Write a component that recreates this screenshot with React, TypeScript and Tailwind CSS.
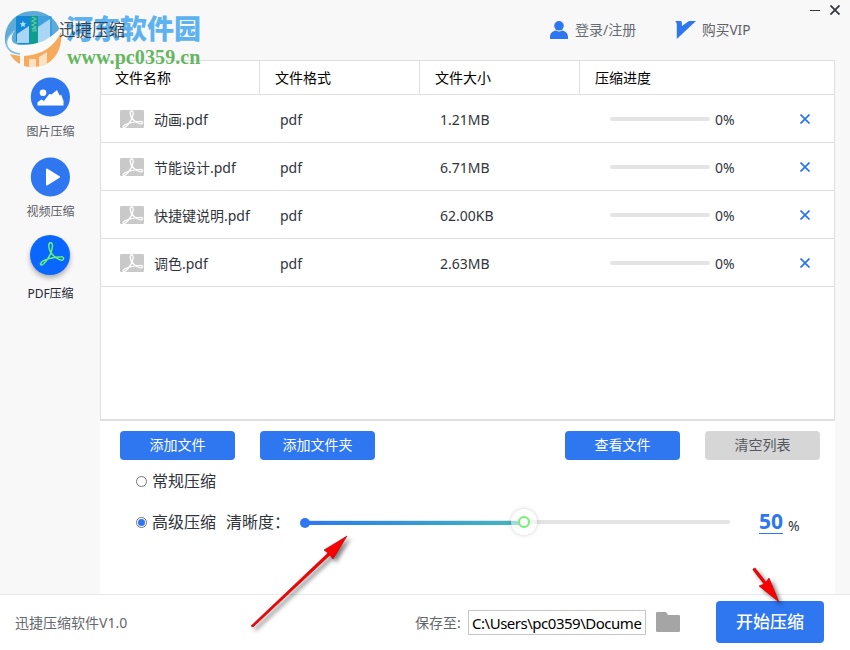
import { useState } from 'react';
import clsx from 'clsx';

interface FileRow {
  name: string;
  type: string;
  size: string;
  progress: number;
}

const FILES: FileRow[] = [
  { name: '动画.pdf', type: 'pdf', size: '1.21MB', progress: 0 },
  { name: '节能设计.pdf', type: 'pdf', size: '6.71MB', progress: 0 },
  { name: '快捷键说明.pdf', type: 'pdf', size: '62.00KB', progress: 0 },
  { name: '调色.pdf', type: 'pdf', size: '2.63MB', progress: 0 },
];

const COLUMNS = ['文件名称', '文件格式', '文件大小', '压缩进度'];

// one ribbon that crosses itself at the root of each of its three loops
const PDF_RIBBON =
  'M20.5 7.800C18 8 18.500 13.500 20.800 17.500C23 21 29.500 26 32.500 25C34.500 24 33.500 21.500 31 21.700C25 22 18 23.500 14 25.500C10.500 27 9.500 30 11.500 30C14.500 29.500 19 22.500 21 17.500C23 12 23 8 20.500 7.800Z';

function FileIcon() {
  return (
    <svg viewBox="0 0 24 18" className="h-[18px] w-6 shrink-0">
      <rect width="24" height="18" rx="1" fill="#c9c9c9" />
      <path d={PDF_RIBBON} transform="translate(-5.600 -5.200) scale(.84 .76)" fill="none" stroke="#fff" strokeWidth="1.6" />
    </svg>
  );
}

function CloseMark({ className }: { className: string }) {
  return (
    <svg viewBox="0 0 10 10" className={className} fill="none" stroke="currentColor" strokeWidth="1.8">
      <path d="M.5 .5l9 9M9.5 .5l-9 9" />
    </svg>
  );
}

function Watermark() {
  return (
    <div className="pointer-events-none absolute top-[5px] left-0 flex">
      <svg viewBox="0 0 70 66" className="h-[66px] w-[66px] shrink-0" preserveAspectRatio="xMinYMin slice">
        <path d="M6 41C1 22 15 6 33 6C46 6 57 14 60 26C55 36 43 42 28 43C17 44 10 43 6 41Z" fill="#5cabd9" />
        <path d="M16 36V13q0-2 2-2h12v28H18z" fill="#1488d6" />
        <path d="M38 39V11h12q2 0 2 2v22z" fill="#3f9fe0" />
        <path d="M30 11h8v28h-8z" fill="#0f9d8e" />
        <path d="M17 38V29l12-8v17zM38 38V22l12-8v19z" fill="#a9d6f5" />
        <path d="M23 16l1 2 2.200.2-1.600 1.500.4 2.300-2-1.100-2 1.100.4-2.300-1.600-1.500L22 18z" fill="#a7def8" />
        <path d="M32 12l4 2-4 2 4 2-4 2 4 2-4 2h4v2h-4" fill="none" stroke="#62c9b5" strokeWidth="1.1" />
        <path d="M15 25C9 34 11 40 23 40C39 40 52 33 61 22C62 35 50 49 29 50C7 51-1 38 15 25Z" fill="#f9fafa" />
        <path d="M13 27C3 35 4 47 20 49" fill="none" stroke="#7dbce6" strokeWidth="1.5" />
        <path d="M10 49l10 2v8C16 57 12 53 10 49zM24 51C42 50 55 41 61 27C63 42 55 62 33 62C30 62 27 62 24 61z" fill="#f5ab5b" />
        <path d="M29 54h7v8h-7zM39 52l8-5v12q-4 2-8 2.500z" fill="#fbe0c3" />
      </svg>
      <div className="flex flex-col pt-[5px]">
        <span className="h-[38px] pt-[2px] font-['Noto_Sans_CJK_SC',sans-serif] text-[27px] leading-[32px] font-black whitespace-nowrap text-[#5eb2ef]">
          河东软件园
        </span>
        <span className="pl-[1px] font-['Liberation_Serif',serif] text-[20px] leading-[18px] font-bold tracking-[0.1px] text-[#65b65f]">
          www.pc0359.cn
        </span>
      </div>
    </div>
  );
}

function Header() {
  return (
    <header className="relative flex h-[60px] shrink-0 items-start">
      <Watermark />
      <h1 className="relative z-10 pt-[20px] pl-[59px] text-[16.5px] leading-[20px] text-[#252a35]/85">迅捷压缩</h1>
      <div className="ml-auto flex pt-[20px] text-[14px] leading-[20px] text-[#666b73]">
        <button className="flex w-[125px]">
          <svg viewBox="0 0 18 18" className="mt-[1px] mr-[7px] h-[18px] w-[18px] fill-[#2e77f1]">
            <circle cx="9" cy="4.8" r="4.8" />
            <path d="M0 18v-2c0-3.600 2.500-6 6-6.500 2 1.200 4 1.200 6 0 3.500.5 6 2.900 6 6.500v2z" />
          </svg>
          登录/注册
        </button>
        <button className="flex w-[136px]">
          <svg viewBox="0 0 21 18" className="mt-[1px] mr-[6px] h-[18px] w-[21px] fill-[#2e77f1]">
            <path d="M0 0h5.500c1.500 0 1.500 2 1.400 5L14 0h7L1.800 18V4C1.800 2 1.300 1 0 0z" />
          </svg>
          <span className="text-[13.7px] text-[#5d6168]">购买VIP</span>
        </button>
      </div>
      <div className="-ml-px flex w-[40px] gap-[10px] pt-[5px] text-[#34373c]">
        <span className="mt-[5px] h-px w-[10px] bg-current" />
        <CloseMark className="h-[10px] w-[10px]" />
      </div>
    </header>
  );
}

function Sidebar() {
  return (
    <nav className="flex w-[101px] shrink-0 flex-col items-center pt-[17px] text-[12px] leading-[18px] text-[#5b5d64]">
      <a className="flex h-[80px] flex-col items-center">
        <svg viewBox="0 0 40 40" className="mb-[6px] h-10 w-10">
          <circle cx="20.400" cy="20" r="19.600" fill="#2e77f1" />
          <circle cx="13" cy="15.700" r="3.300" fill="#fff" />
          <path d="M7.500 28.500v-3.300l4-2.700 2.500 1.500 5.300-7 2.200.6 5.500-4.600 2.700 5.500 1.500-.8 2.300 6.300v4.500z" fill="#fff" />
        </svg>
        图片压缩
      </a>
      <a className="flex h-[78px] flex-col items-center">
        <svg viewBox="0 0 40 40" className="mb-[6px] h-10 w-10">
          <circle cx="20.400" cy="20" r="19.600" fill="#2e77f1" />
          <path d="M17 12.500l12 7.500-12 7.500z" fill="#fff" stroke="#fff" strokeWidth="2" strokeLinejoin="round" />
        </svg>
        视频压缩
      </a>
      <a className="flex flex-col items-center text-[#222733]">
        <span className="mr-[2px] mb-[10px] h-10 w-10 rounded-full bg-[#0966ff] shadow-[0_3px_5px_rgba(0,0,0,0.3)]">
          <svg viewBox="0 0 40 40" className="h-10 w-10">
            <path d={PDF_RIBBON} fill="none" stroke="#69f36e" strokeWidth="1.5" strokeLinejoin="round" />
          </svg>
        </span>
        PDF压缩
      </a>
    </nav>
  );
}

function FileTable() {
  return (
    <section className="h-[361px] border border-b-2 border-[#dfdfdf] bg-white">
      <div className="flex h-[34px] border-b border-[#dfdfdf] text-[14px] leading-[33px] text-black">
        {COLUMNS.map((label, i) => (
          <div key={label} className={clsx(i === 0 ? 'w-[159px] pl-[14px]' : 'w-[160px] pl-[15px]', i < 3 && 'border-r border-[#dfdfdf]')}>
            {label}
          </div>
        ))}
      </div>
      {FILES.map((file) => (
        <div key={file.name} className="flex h-12 items-center border-b border-[#dfdfdf] pl-[19px] text-[14px] text-[#30343c]">
          <div className="flex w-[160px] items-center gap-[10px] whitespace-nowrap">
            <FileIcon />
            <span className="pt-[2px]">{file.name}</span>
          </div>
          <span className="w-[160px] pt-[2px]">{file.type}</span>
          <span className="w-[170px] pt-[2px]">{file.size}</span>
          <div className="h-1 w-[100px] rounded-full bg-[#e4e4e4]">
            <div className="h-1 rounded-full bg-[#2e77f1]" style={{ width: `${file.progress}%` }} />
          </div>
          <span className="w-[90px] pt-[1px] pl-[5px]">{file.progress}%</span>
          <CloseMark className="h-[10px] w-[10px] text-[#2e77f1]" />
        </div>
      ))}
    </section>
  );
}

function Radio({ checked, label, onSelect }: { checked: boolean; label: string; onSelect: () => void }) {
  return (
    <button onClick={onSelect} className="flex items-center gap-[5px]">
      <span className="flex h-[11px] w-[11px] items-center justify-center rounded-full border border-[#737373] bg-white">
        {checked && <span className="h-[7px] w-[7px] rounded-full bg-[#2e77f1]" />}
      </span>
      {label}
    </button>
  );
}

function QualitySlider() {
  return (
    <div className="relative flex h-[26px] w-[430px] shrink-0 items-center">
      <div className="h-1 w-full rounded-full bg-[#e4e4e4]" />
      <div className="absolute top-[12px] left-[5px] h-1 w-[214px] bg-linear-to-r from-[#2e77f1] to-[#43b7be]" />
      <div className="absolute top-[9px] left-0 h-[10px] w-[10px] rounded-full bg-[#2e77f1]" />
      <div className="absolute top-0 left-[211px] flex h-[26px] w-[26px] items-center justify-center rounded-full bg-white/50 shadow-[0_0_4px_rgba(0,0,0,0.2)]">
        <span className="h-3 w-3 rounded-full border-2 border-[#70f36f] bg-white" />
      </div>
    </div>
  );
}

function Controls() {
  const [mode, setMode] = useState<'normal' | 'advanced'>('advanced');
  const button = 'h-[29px] w-[115px] rounded-[4px] pb-[2px] text-[14px] leading-[25px]';

  return (
    <section className="flex-1 bg-white pt-[10px]">
      <div className="flex pr-[15px] pl-5">
        <button className={clsx(button, 'mr-[25px] bg-[#2e77f1] text-white')}>添加文件</button>
        <button className={clsx(button, 'bg-[#2e77f1] text-white')}>添加文件夹</button>
        <button className={clsx(button, 'mr-[25px] ml-auto bg-[#2e77f1] text-white')}>查看文件</button>
        <button className={clsx(button, 'bg-[#d6d6d6] text-[#55585e]')}>清空列表</button>
      </div>
      <div className="mt-[9px] ml-[36px] flex h-6 items-center text-[16px] text-[#30343c]">
        <Radio checked={mode === 'normal'} label="常规压缩" onSelect={() => setMode('normal')} />
      </div>
      <div className="mt-4 ml-[36px] flex h-[26px] items-center text-[16px] text-[#30343c]">
        <Radio checked={mode === 'advanced'} label="高级压缩" onSelect={() => setMode('advanced')} />
        <span className="w-[84px] pl-[10px] whitespace-nowrap">清晰度：</span>
        <QualitySlider />
        <span className="ml-[29px] h-[23px] border-b border-[#2e77f1] text-[21px] leading-[21px] font-bold text-[#2e77f1]">50</span>
        <span className="mt-[7px] ml-[5px] text-[14px]">%</span>
      </div>
    </section>
  );
}

function Footer() {
  return (
    <footer className="flex h-[56px] shrink-0 items-center border-t border-[#e9e9e9] bg-white pl-[15px] text-[14px] text-[#63666c]">
      <span className="w-[400px]">迅捷压缩软件V1.0</span>
      <span className="w-[53px]">保存至:</span>
      <div className="flex h-[25px] w-[178px] items-center border border-[#c7c7c7] pt-[2px] pl-[3px] text-[15px] tracking-[-0.48px] whitespace-nowrap text-black">
        C:\Users\pc0359\Docume
      </div>
      <svg viewBox="0 0 24 20" className="mb-[2px] ml-[10px] h-5 w-6 fill-[#a5a5a5]">
        <path d="M1 0h9l2 3h11q1 0 1 1v15q0 1-1 1H1q-1 0-1-1V1q0-1 1-1z" />
      </svg>
      <button className="mb-[2px] ml-[36px] h-[42px] w-[108px] rounded bg-[#2e77f1] text-[17px] font-medium text-white">开始压缩</button>
    </footer>
  );
}

function PointerArrows() {
  return (
    <svg
      viewBox="0 0 850 650"
      className="pointer-events-none absolute inset-0 h-[650px] w-[850px] fill-[#fa0000] stroke-[#b00000] drop-shadow-[3px_3px_2px_rgba(0,0,0,0.5)]"
    >
      <path d="M251 626l77-73-4-3 23-14-14 23-3-4-77 72z" strokeWidth=".6" />
      <path d="M753 569l2-1 11 14 3-4 10 24-20-16 5-2-11-14z" strokeWidth=".6" />
    </svg>
  );
}

export default function App() {
  return (
    <div className="relative flex h-[650px] w-[850px] flex-col overflow-hidden bg-[#f8f8f8] font-['Noto_Sans','Noto_Sans_CJK_SC',sans-serif]">
      <Header />
      <main className="flex min-h-0 flex-1">
        <Sidebar />
        <div className="-ml-px flex w-[735px] flex-col">
          <FileTable />
          <Controls />
        </div>
      </main>
      <Footer />
      <PointerArrows />
    </div>
  );
}
